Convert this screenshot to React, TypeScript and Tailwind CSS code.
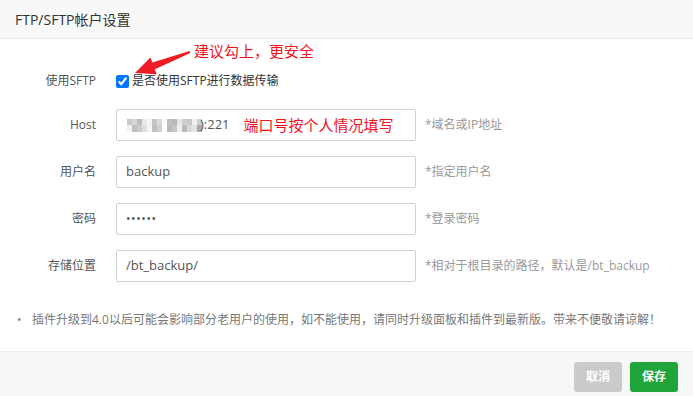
import React from "react";

const font = { fontFamily: '"Open Sans", "Noto Sans CJK SC", sans-serif' };

// mosaic cells covering the host address (two rows)
const mosaicTop = ["#c9c9c9", "#d6d6d6", "#bdbdbd", "#e9e9e9", "#f4f4f4", "#c4c4c4", "#dcdcdc", "#fafafa", "#c0c0c0", "#b8b8b8", "#e6e6e6", "#d0d0d0", "#c8c8c8", "#f0f0f0", "#cfcfcf"];
const mosaicBottom = ["#f2f2f2", "#bfbfbf", "#cacaca", "#dedede", "#f6f6f6", "#c2c2c2", "#cfcfcf", "#ffffff", "#b9b9b9", "#c6c6c6", "#efefef", "#bbbbbb", "#dadada", "#e3e3e3", "#a9a9a9"];

const rows = [
  { label: "用户名", value: "backup", hint: "*指定用户名" },
  { label: "密码", value: "••••••", hint: "*登录密码", password: true },
  { label: "存储位置", value: "/bt_backup/", hint: "*相对于根目录的路径，默认是/bt_backup" },
];

export default function App() {
  return (
    <div className="relative w-[693px] h-[396px] bg-white flex flex-col overflow-hidden" style={font}>
      {/* Header */}
      <div className="h-[39px] shrink-0 bg-[#f8f8f8] border-b border-[#eaeaea] flex items-center px-[15px]">
        <span className="text-[14px] text-[#333]">FTP/SFTP帐户设置</span>
      </div>

      {/* Body */}
      <div className="flex-1 flex flex-col pt-[32px]">
        <div className="flex items-center h-[20px]">
          <div className="w-[96px] text-right text-[12px] text-[#555]">使用SFTP</div>
          <label className="ml-[20px] flex items-center gap-[3px] text-[12px] text-[#333]">
            <input type="checkbox" defaultChecked className="w-[13px] h-[13px] m-0 accent-[#0075ff]" />
            是否使用SFTP进行数据传输
          </label>
        </div>

        <div className="mt-[18px] flex flex-col gap-[15px]">
          <div className="flex items-center h-[32px]">
            <div className="w-[96px] text-right text-[12px] text-[#555]">Host</div>
            <div className="relative ml-[20px] w-[300px] h-[32px] border border-[#d0d0d0] rounded-[2px] flex items-center pl-[10px]">
              <div className="flex flex-col">
                <div className="flex">
                  {mosaicTop.map((c, i) => (
                    <span key={i} className="block w-[5px] h-[6px]" style={{ backgroundColor: c }} />
                  ))}
                </div>
                <div className="flex">
                  {mosaicBottom.map((c, i) => (
                    <span key={i} className="block w-[5px] h-[7px]" style={{ backgroundColor: c }} />
                  ))}
                </div>
              </div>
              <span className="text-[13px] text-[#555] -ml-[2px]">):221</span>
              <span className="ml-[14px] text-[15px] text-[#f0131e]">端口号按个人情况填写</span>
            </div>
            <span className="ml-[9px] text-[12px] text-[#999]">*域名或IP地址</span>
          </div>

          {rows.map((r) => (
            <div key={r.label} className="flex items-center h-[32px]">
              <div className="w-[96px] text-right text-[12px] text-[#555]">{r.label}</div>
              <div className="ml-[20px] w-[300px] h-[32px] border border-[#d0d0d0] rounded-[2px] flex items-center pl-[9px]">
                <span className={r.password ? "text-[12px] tracking-[0.6px] text-[#555]" : "text-[13px] text-[#555]"}>{r.value}</span>
              </div>
              <span className="ml-[9px] text-[12px] text-[#999]">{r.hint}</span>
            </div>
          ))}
        </div>

        <div className="mt-[28px] flex items-center h-[20px] pl-[17px] text-[12px] text-[#777]">
          <span className="w-[15px] text-[#888]">•</span>
          <span>插件升级到4.0以后可能会影响部分老用户的使用，如不能使用，请同时升级面板和插件到最新版。带来不便敬请谅解！</span>
        </div>
      </div>

      {/* Footer */}
      <div className="h-[45px] shrink-0 bg-[#f6f8f8] border-t border-[#eef0f0] flex items-center justify-end gap-[8px] pr-[15px] pt-[5px]">
        <button className="w-[48px] h-[30px] rounded-[3px] bg-[#cbcbcb] text-white text-[12px] font-bold">取消</button>
        <button className="w-[48px] h-[30px] rounded-[3px] bg-[#20a53a] text-white text-[12px] font-bold">保存</button>
      </div>

      {/* Annotation */}
      <span className="absolute left-[194px] top-[41px] text-[15px] text-[#f0131e] leading-[20px]">建议勾上，更安全</span>
      <svg className="absolute left-0 top-0 pointer-events-none" width="693" height="396">
        <polygon
          points="135,73 150.4,57.5 152.4,62.6 189.6,51.1 190.4,52.9 154.8,69.2 156.8,74.3"
          fill="#ee1c25"
        />
      </svg>
    </div>
  );
}
